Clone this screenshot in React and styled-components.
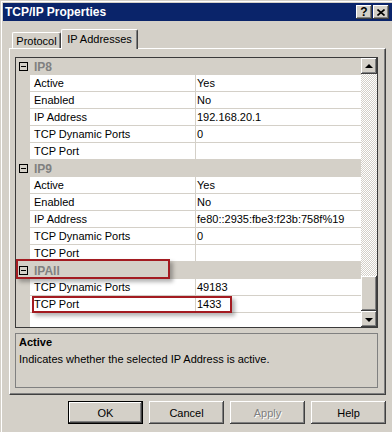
import React from 'react';
import styled, { createGlobalStyle, css } from 'styled-components';

const FACE = '#d4d0c8';
const SHADOW = '#808080';
const DARK = '#404040';
const ROW_H = 17;

const GlobalStyle = createGlobalStyle`
  html, body {
    margin: 0;
    padding: 0;
    background: ${FACE};
  }
  body {
    font-family: "Liberation Sans", Arial, sans-serif;
    font-size: 11px;
    color: #000;
  }
`;

const raised = css`
  box-shadow: inset -1px -1px ${DARK}, inset 1px 1px #fff,
    inset -2px -2px ${SHADOW}, inset 2px 2px ${FACE};
`;

const categories = [
  {
    name: 'IP8',
    props: [
      ['Active', 'Yes'],
      ['Enabled', 'No'],
      ['IP Address', '192.168.20.1'],
      ['TCP Dynamic Ports', '0'],
      ['TCP Port', ''],
    ],
  },
  {
    name: 'IP9',
    props: [
      ['Active', 'Yes'],
      ['Enabled', 'No'],
      ['IP Address', 'fe80::2935:fbe3:f23b:758f%19'],
      ['TCP Dynamic Ports', '0'],
      ['TCP Port', ''],
    ],
  },
  {
    name: 'IPAll',
    props: [
      ['TCP Dynamic Ports', '49183'],
      ['TCP Port', '1433'],
    ],
  },
];

// red marker boxes, row index based
const marks = [
  { row: 12, left: 0, width: 154, height: 20, shift: -3 },
  { row: 14, left: 16, width: 200, height: 17, shift: 0 },
];

const Window = styled.div`
  width: 392px;
  height: 432px;
  box-sizing: border-box;
  padding: 3px 0 0 3px;
  overflow: hidden;
  background: ${FACE};
  box-shadow: inset 1px 1px ${FACE}, inset 2px 2px #fff;
`;

const TitleBar = styled.div`
  height: 18px;
  display: flex;
  align-items: center;
  padding: 0 3px 0 2px;
  background: #0a246a;
`;

const Title = styled.div`
  flex: 1;
  color: #fff;
  font-weight: bold;
  font-size: 12px;
`;

const CaptionButton = styled.div`
  width: 16px;
  height: 14px;
  display: flex;
  align-items: center;
  justify-content: center;
  background: ${FACE};
  font-weight: bold;
  font-size: 12px;
  line-height: 1;
  margin-left: ${({ $gap }) => $gap || 0}px;
  ${raised};
`;

const Content = styled.div`
  margin-left: 6px;
  width: 377px;
  margin-top: 8px;
`;

const TabStrip = styled.div`
  display: flex;
  align-items: flex-end;
  height: 19px;
  padding-left: 3px;
`;

const Tab = styled.div`
  box-sizing: border-box;
  display: flex;
  align-items: center;
  justify-content: center;
  background: ${FACE};
  border-top: 1px solid #fff;
  border-left: 1px solid #fff;
  border-right: 1px solid ${DARK};
  box-shadow: inset -1px 0 ${SHADOW};
  border-radius: 2px 2px 0 0;
  width: ${({ $w }) => $w}px;
  ${({ $active }) =>
    $active
      ? css`
          height: 20px;
          margin-bottom: -1px;
          position: relative;
          z-index: 1;
          padding-bottom: 2px;
        `
      : css`
          height: 16px;
        `}
`;

const Panel = styled.div`
  box-sizing: border-box;
  height: 347px;
  padding: 8px 7px 6px 5px;
  border-top: 1px solid #fff;
  border-left: 1px solid #fff;
  border-right: 1px solid ${DARK};
  border-bottom: 1px solid ${DARK};
  box-shadow: inset -1px -1px ${SHADOW};
  display: flex;
  flex-direction: column;
  gap: 5px;
`;

const ListBox = styled.div`
  box-sizing: border-box;
  height: 271px;
  border: 1px solid #3a3a3a;
  display: flex;
  background: #fff;
`;

const GridBody = styled.div`
  position: relative;
  flex: 1;
  background: linear-gradient(to right, ${FACE} 14px, #fff 14px);
`;

const Row = styled.div`
  box-sizing: border-box;
  height: ${ROW_H}px;
  display: grid;
  grid-template-columns: 14px 166px 1fr;
  align-items: stretch;
  ${({ $category }) =>
    $category &&
    css`
      background: ${FACE};
    `}
`;

const Margin = styled.div`
  background: ${FACE};
  display: flex;
  align-items: center;
  justify-content: center;
  padding-left: 1px;
`;

const Cell = styled.div`
  box-sizing: border-box;
  display: flex;
  align-items: center;
  white-space: nowrap;
  overflow: hidden;
  background: #fff;
  border-bottom: 1px solid ${FACE};
  padding-left: ${({ $pad }) => $pad}px;
  ${({ $divider }) =>
    $divider &&
    css`
      border-right: 1px solid ${FACE};
    `}
`;

const CategoryLabel = styled.div`
  grid-column: 2 / 4;
  display: flex;
  align-items: center;
  padding-left: 4px;
  font-weight: bold;
  font-size: 12px;
  color: ${SHADOW};
`;

const Minus = styled.div`
  box-sizing: border-box;
  width: 9px;
  height: 9px;
  border: 1px solid #000;
  position: relative;
  &::after {
    content: '';
    position: absolute;
    left: 1px;
    top: 3px;
    width: 5px;
    height: 1px;
    background: #000;
  }
`;

const Mark = styled.div`
  position: absolute;
  box-sizing: border-box;
  border: 2px solid #a31b21;
  box-shadow: 3px 3px 4px rgba(0, 0, 0, 0.3);
  pointer-events: none;
`;

const ScrollBar = styled.div`
  width: 16px;
  display: flex;
  flex-direction: column;
`;

const ScrollButton = styled.div`
  height: 16px;
  background: ${FACE};
  display: flex;
  align-items: center;
  justify-content: center;
  ${raised};
`;

const Arrow = styled.div`
  width: 0;
  height: 0;
  border-left: 4px solid transparent;
  border-right: 4px solid transparent;
  ${({ $down }) =>
    $down
      ? css`
          border-top: 4px solid #000;
          margin-top: 1px;
        `
      : css`
          border-bottom: 4px solid #000;
          margin-top: -1px;
        `}
`;

const Track = styled.div`
  flex: 1;
  background-color: ${FACE};
  background-image: conic-gradient(#fff 25%, ${FACE} 0 50%, #fff 0 75%, ${FACE} 0);
  background-size: 2px 2px;
  display: flex;
  flex-direction: column;
  justify-content: flex-end;
`;

const Thumb = styled.div`
  height: 35px;
  background: ${FACE};
  ${raised};
`;

const Description = styled.div`
  box-sizing: border-box;
  height: 55px;
  border: 1px solid ${SHADOW};
  padding: 0 3px;
`;

const DescTitle = styled.div`
  font-weight: bold;
  line-height: 17px;
`;

const DescText = styled.div`
  line-height: 17px;
`;

const ButtonRow = styled.div`
  display: flex;
  justify-content: flex-end;
  gap: 6px;
  margin-top: 6px;
`;

const Button = styled.div`
  box-sizing: border-box;
  width: 75px;
  height: 23px;
  display: flex;
  align-items: center;
  justify-content: center;
  background: ${FACE};
  ${({ $default }) =>
    $default
      ? css`
          box-shadow: inset 0 0 0 1px #000, inset -2px -2px ${DARK},
            inset 2px 2px #fff, inset -3px -3px ${SHADOW};
        `
      : raised}
  ${({ $disabled }) =>
    $disabled &&
    css`
      color: ${SHADOW};
      text-shadow: 1px 1px #fff;
    `}
`;

const CloseGlyph = () => (
  <svg width="8" height="7" viewBox="0 0 8 7">
    <path d="M0.5 0.5 L7.5 6.5 M7.5 0.5 L0.5 6.5" stroke="#000" strokeWidth="1.6" />
  </svg>
);

const PropertyGrid = () => {
  const rows = [];
  categories.forEach((cat) => {
    rows.push(
      <Row key={cat.name} $category>
        <Margin>
          <Minus />
        </Margin>
        <CategoryLabel>{cat.name}</CategoryLabel>
      </Row>
    );
    cat.props.forEach(([name, value], i) => {
      rows.push(
        <Row key={`${cat.name}-${i}`}>
          <Margin />
          <Cell $divider $pad={4}>
            {name}
          </Cell>
          <Cell $pad={1}>{value}</Cell>
        </Row>
      );
    });
  });

  return (
    <ListBox>
      <GridBody>
        {rows}
        {marks.map((m) => (
          <Mark
            key={m.row}
            style={{
              top: m.row * ROW_H + m.shift,
              left: m.left,
              width: m.width,
              height: m.height,
            }}
          />
        ))}
      </GridBody>
      <ScrollBar>
        <ScrollButton>
          <Arrow />
        </ScrollButton>
        <Track>
          <Thumb />
        </Track>
        <ScrollButton>
          <Arrow $down />
        </ScrollButton>
      </ScrollBar>
    </ListBox>
  );
};

export default function App() {
  return (
    <>
      <GlobalStyle />
      <Window>
        <TitleBar>
          <Title>TCP/IP Properties</Title>
          <CaptionButton>?</CaptionButton>
          <CaptionButton $gap={1}>
            <CloseGlyph />
          </CaptionButton>
        </TitleBar>
        <Content>
          <TabStrip>
            <Tab $w={49}>Protocol</Tab>
            <Tab $w={77} $active>
              IP Addresses
            </Tab>
          </TabStrip>
          <Panel>
            <PropertyGrid />
            <Description>
              <DescTitle>Active</DescTitle>
              <DescText>Indicates whether the selected IP Address is active.</DescText>
            </Description>
          </Panel>
          <ButtonRow>
            <Button $default>OK</Button>
            <Button>Cancel</Button>
            <Button $disabled>Apply</Button>
            <Button>Help</Button>
          </ButtonRow>
        </Content>
      </Window>
    </>
  );
}
